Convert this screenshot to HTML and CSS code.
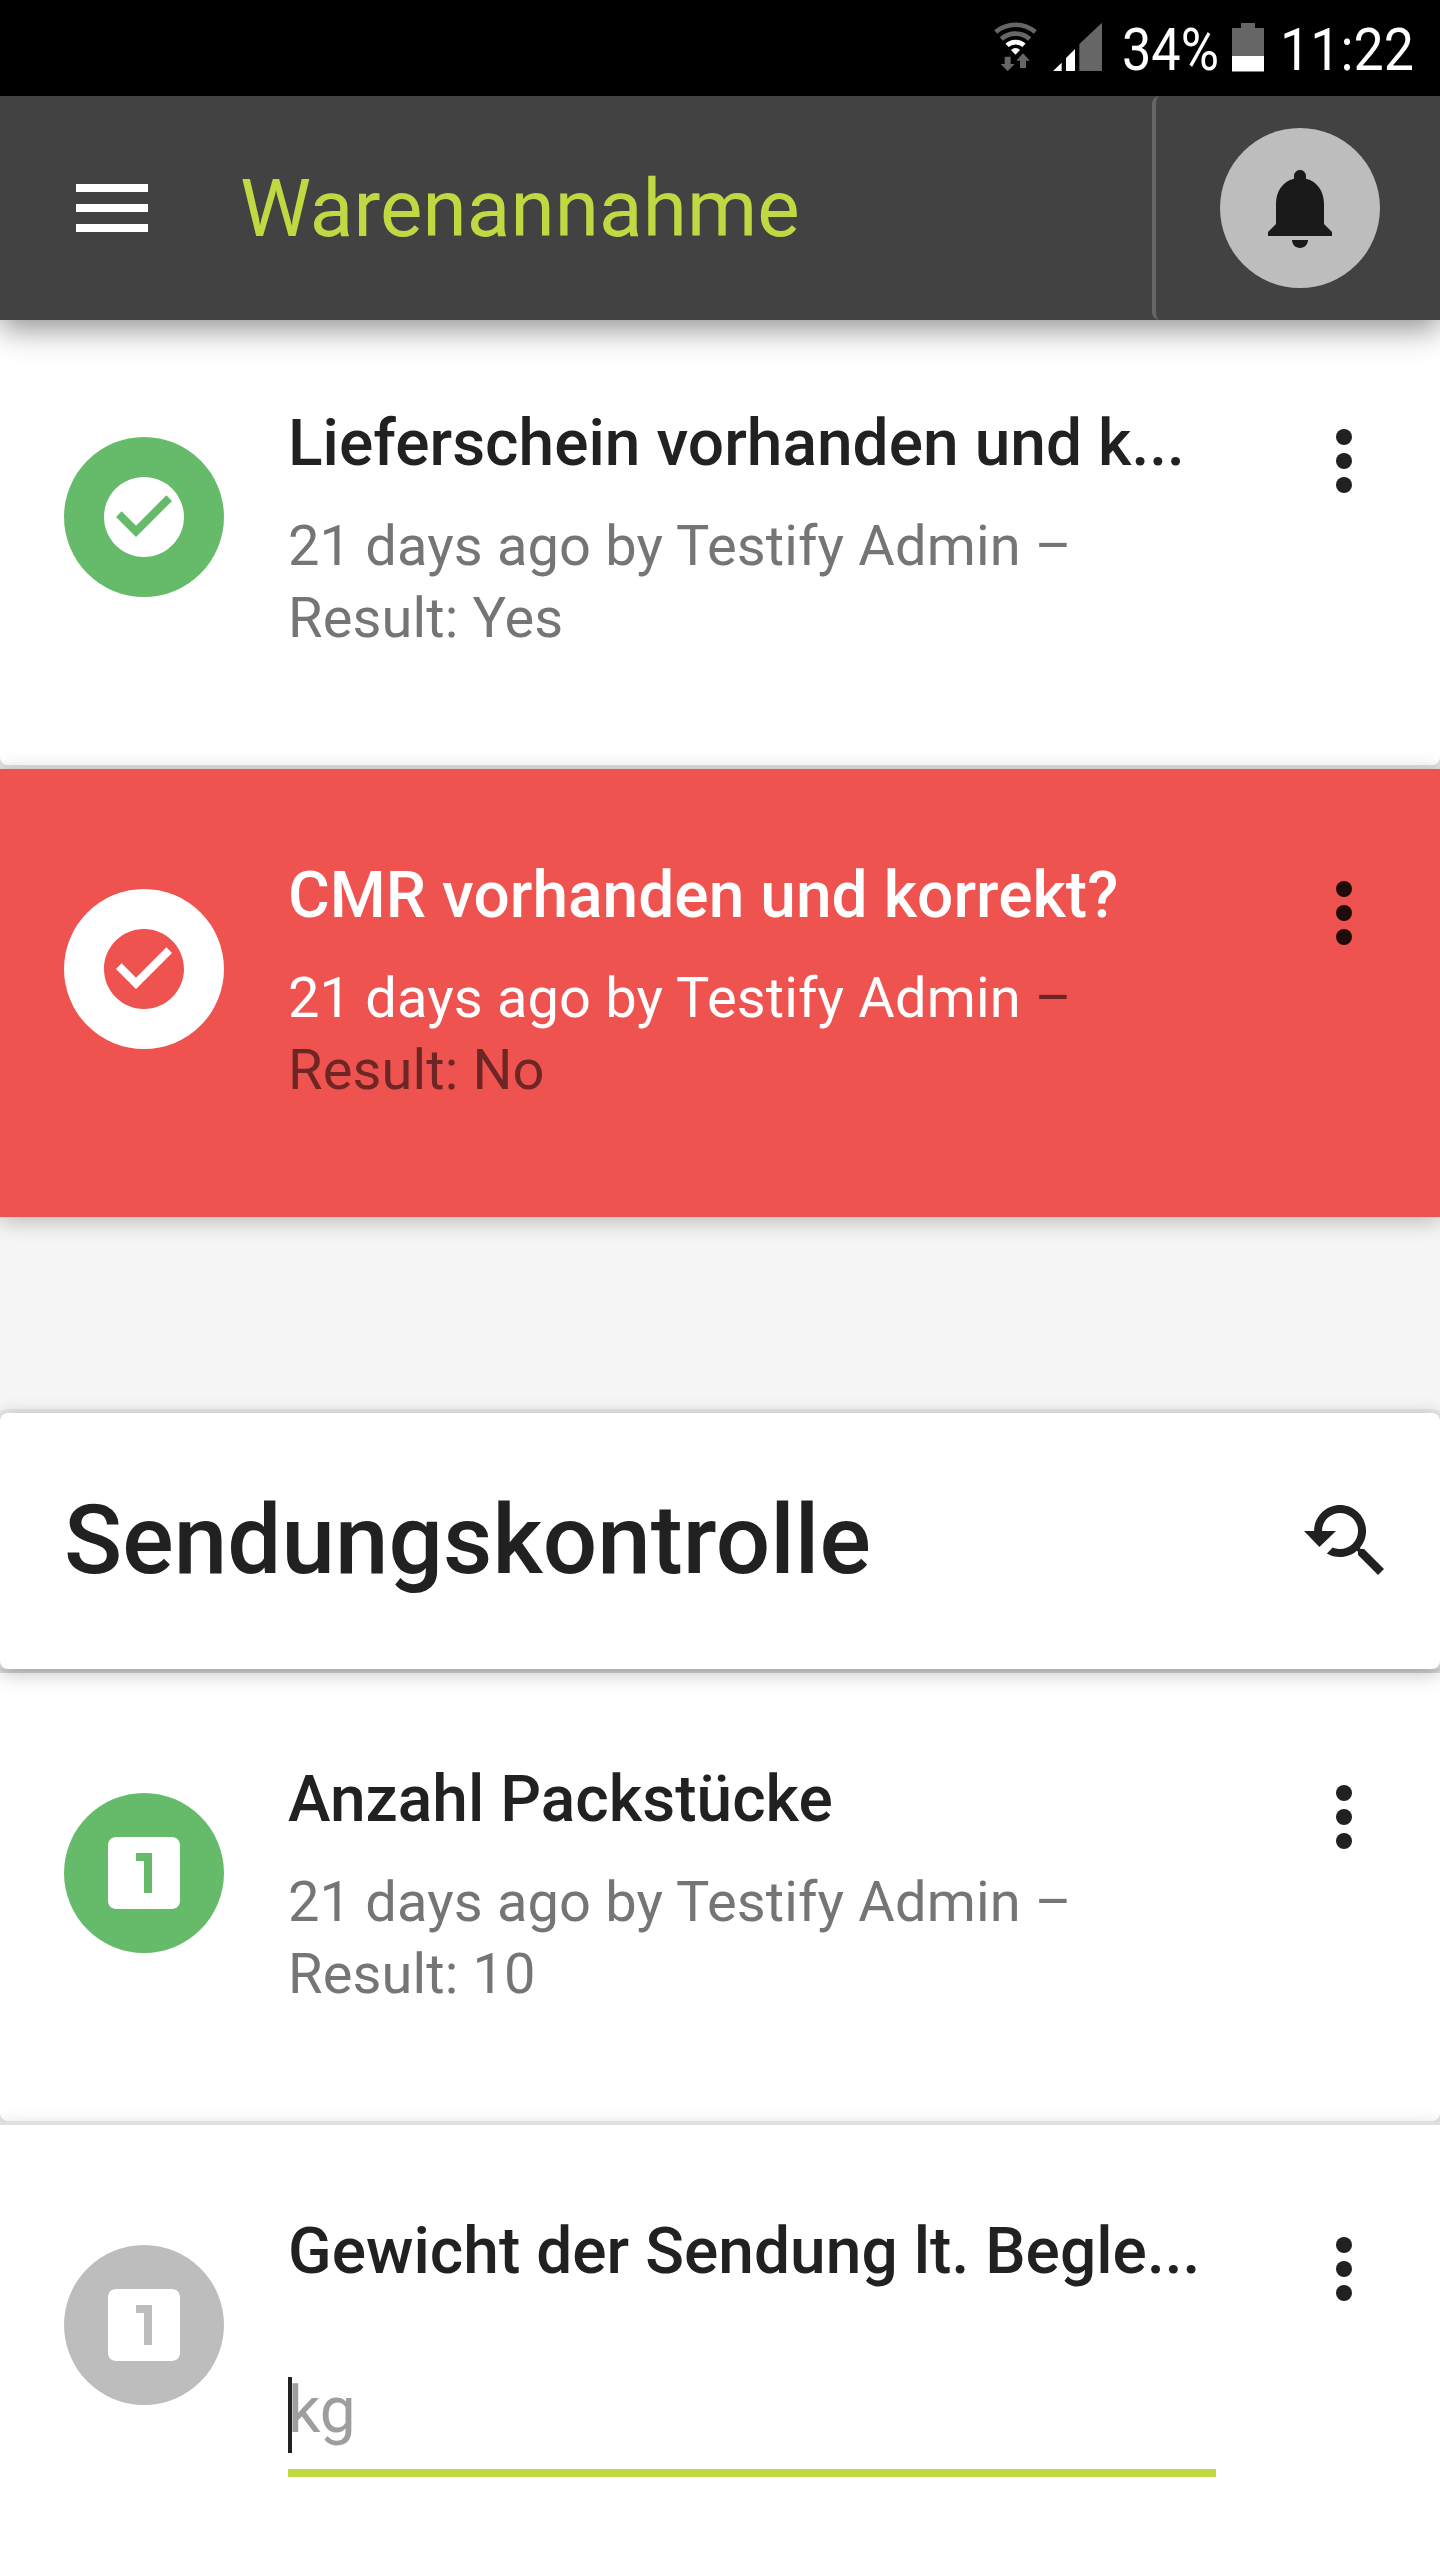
FILE: index.html
```html
<!DOCTYPE html>
<html lang="de">
<head>
    <meta charset="UTF-8">
    <meta name="viewport" content="width=device-width, initial-scale=1.0">
    <title>Warenannahme</title>
    <link rel="stylesheet" href="styles.css">
</head>
<body>
    <svg class="sprite" width="0" height="0">
        <symbol id="check" viewBox="0 0 24 24"><path d="M12 2C6.48 2 2 6.48 2 12s4.48 10 10 10 10-4.48 10-10S17.52 2 12 2zm-2 15l-5-5 1.41-1.41L10 14.17l7.59-7.59L19 8l-9 9z"/></symbol>
        <symbol id="one" viewBox="0 0 24 24"><path d="M19 3H5c-1.1 0-2 .9-2 2v14c0 1.1.9 2 2 2h14c1.1 0 2-.9 2-2V5c0-1.1-.9-2-2-2zm-5 14h-2V9h-2V7h4v10z"/></symbol>
        <symbol id="more" viewBox="0 0 24 24"><circle cx="12" cy="6" r="2"/><circle cx="12" cy="12" r="2"/><circle cx="12" cy="18" r="2"/></symbol>
    </svg>

    <div class="statusbar">
        <!-- wifi, signal -->
        <svg class="status-icons" viewBox="0 0 480 288">
            <g fill="none" stroke-width="14">
                <path stroke="#666" d="M107 96A92 92 0 0 1 226 96"/>
                <path stroke="#666" d="M124 117A64 64 0 0 1 209 117"/>
                <path stroke="#fff" d="M141 136A38 38 0 0 1 192 136"/>
            </g>
            <path fill="#fff" d="M166.500 164L153 150Q166.500 138 180 150z"/>
            <path fill="#666" d="M134 170h18v22h12l-21 22-21-22h12z"/>
            <path fill="#666" d="M180 204h18v-22h12l-21-22-20 22h11z"/>
            <path fill="#fff" d="M279 213L305 188V213zM318 213V174L345 147V213z"/>
            <path fill="#666" d="M358 213V132L426 68V213z"/>
        </svg>
        <svg class="battery-text" viewBox="0 0 100 96"><text x="0" y="70" textLength="97" lengthAdjust="spacingAndGlyphs">34%</text></svg>
        <svg class="battery" viewBox="0 0 32 96">
            <path fill="#666" d="M0 28h9v-5h14v5h9v28H0z"/>
            <path fill="#fff" d="M0 56h32v15.500H0z"/>
        </svg>
        <svg class="clock" viewBox="0 0 140 96"><text x="1" y="70" textLength="134" lengthAdjust="spacingAndGlyphs">11:22</text></svg>
    </div>

    <header class="toolbar">
        <svg class="icon menu" viewBox="0 0 24 24"><path d="M3 18h18v-2H3v2zm0-5h18v-2H3v2zm0-7v2h18V6H3z"/></svg>
        <h1>Warenannahme</h1>
        <div class="alerts">
            <div class="avatar bell">
                <svg class="icon" viewBox="0 0 24 24"><path d="M12 22c1.100 0 2-.9 2-2h-4c0 1.100.89 2 2 2zm6-6v-5c0-3.070-1.640-5.640-4.500-6.320V4c0-.83-.67-1.500-1.500-1.500s-1.500.67-1.500 1.500v.68C7.630 5.360 6 7.920 6 11v5l-2 2v1h16v-1l-2-2z"/></svg>
            </div>
        </div>
    </header>

    <main>
        <div class="item">
            <div class="avatar done"><svg class="icon"><use href="#check"/></svg></div>
            <div class="text">
                <h3>Lieferschein vorhanden und k...</h3>
                <p>21 days ago by Testify Admin –<br>Result: Yes</p>
            </div>
            <svg class="icon more"><use href="#more"/></svg>
        </div>
        <div class="item failed">
            <div class="avatar"><svg class="icon"><use href="#check"/></svg></div>
            <div class="text">
                <h3>CMR vorhanden und korrekt?</h3>
                <p><span>21 days ago by Testify Admin</span> –<br>Result: No</p>
            </div>
            <svg class="icon more"><use href="#more"/></svg>
        </div>

        <div class="group">
            <h2>Sendungskontrolle</h2>
            <svg class="icon" viewBox="0 0 24 24"><path d="M17.010 14h-.8l-.27-.27c.98-1.140 1.570-2.610 1.570-4.230 0-3.590-2.910-6.500-6.500-6.500s-6.500 3-6.500 6.500H2l3.840 4 4.160-4H6.510C6.510 7 8.530 5 11.010 5s4.500 2.010 4.500 4.500c0 2.480-2.020 4.500-4.500 4.500-.65 0-1.260-.14-1.820-.38L7.710 15.100c.97.57 2.090.9 3.300.9 1.610 0 3.080-.59 4.220-1.570l.27.27v.79l5.010 4.990L22 19l-4.990-5z"/></svg>
        </div>

        <div class="item">
            <div class="avatar done"><svg class="icon"><use href="#one"/></svg></div>
            <div class="text">
                <h3>Anzahl Packstücke</h3>
                <p>21 days ago by Testify Admin –<br>Result: 10</p>
            </div>
            <svg class="icon more"><use href="#more"/></svg>
        </div>
        <div class="item">
            <div class="avatar open"><svg class="icon"><use href="#one"/></svg></div>
            <div class="text">
                <h3>Gewicht der Sendung lt. Begle...</h3>
                <div class="field"><span class="cursor"></span>kg</div>
            </div>
            <svg class="icon more"><use href="#more"/></svg>
        </div>
    </main>
</body>
</html>
```

FILE: styles.css
```css
* {
    box-sizing: border-box;
}
body {
    font-family: Roboto, sans-serif;
    margin: 0;
    height: 2560px;
    overflow: hidden;
    background-color: #f5f5f5;
    color: #212121;
}
h1, h2, h3, p {
    margin: 0;
}
svg {
    display: block;
    flex: none;
}
.sprite {
    position: absolute;
}
.icon {
    width: 96px;
    height: 96px;
    fill: currentColor;
}

/* status bar */
.statusbar {
    display: flex;
    height: 96px;
    padding-left: 960px;
    background-color: #000;
}
.statusbar svg {
    overflow: visible;
}
.statusbar text {
    font-size: 60px;
    fill: #fff;
}
.status-icons {
    width: 160px;
    height: 96px;
}
.battery-text {
    width: 100px;
    height: 96px;
    margin-left: 2px;
}
.battery {
    width: 32px;
    height: 96px;
    margin-left: 10px;
}
.clock {
    width: 140px;
    height: 96px;
    margin-left: 15px;
}

/* toolbar */
.toolbar {
    position: relative;
    z-index: 10;
    display: flex;
    align-items: center;
    height: 224px;
    padding-left: 64px;
    background-color: #424242;
    box-shadow: 0 8px 30px rgba(0, 0, 0, 0.46);
}
.menu {
    color: #fff;
}
.toolbar h1 {
    flex: 1;
    margin-left: 80px;
    padding-top: 2px;
    font-size: 80px;
    font-weight: 400;
    letter-spacing: 0.13px;
    color: #c0d842;
}
.alerts {
    width: 288px;
    height: 224px;
    padding: 32px 0 0 64px;
    border-left: 4px solid #666;
    border-radius: 8px;
}
.avatar {
    display: flex;
    align-items: center;
    justify-content: center;
    flex: none;
    width: 160px;
    height: 160px;
    border-radius: 50%;
    color: #fff;
}
.bell {
    background-color: #bdbdbd;
    color: #1a1a1a;
}
.done {
    background-color: #66bb6a;
}
.open {
    background-color: #bdbdbd;
}

/* checklist items */
main {
    margin-top: -3px;
}
.item {
    display: flex;
    align-items: flex-start;
    height: 448px;
    margin-bottom: 4px;
    padding: 96px 48px 0 64px;
    background-color: #fff;
    border-radius: 0 0 8px 8px;
    box-shadow: 0 0 0 4px #e0e0e0, 0 4px 20px rgba(0, 0, 0, 0.26);
}
.item .avatar {
    margin-top: 24px;
}
.text {
    flex: 1;
    margin-left: 64px;
}
.text h3 {
    margin-top: -7px;
    font-size: 64px;
    line-height: 76px;
    font-weight: 500;
    letter-spacing: 0.04px;
    white-space: nowrap;
}
.text p {
    margin-top: 28px;
    font-size: 56px;
    line-height: 72px;
    letter-spacing: 0.14px;
    color: #757575;
}
.failed {
    margin-bottom: 0;
    background-color: #ef5350;
    border-radius: 0;
    box-shadow: 0 4px 20px rgba(0, 0, 0, 0.26);
}
.failed .avatar {
    background-color: #fff;
    color: #ef5350;
}
.failed h3,
.failed span {
    color: #fff;
}
.failed p {
    color: #6e2625;
}
.failed .more {
    color: #1f0b0a;
}
.group {
    position: relative;
    display: flex;
    align-items: center;
    justify-content: space-between;
    height: 256px;
    margin: 196px 0 4px;
    padding: 0 48px 0 64px;
    background-color: #fff;
    border-radius: 8px;
    box-shadow: 0 0 0 4px rgba(0, 0, 0, 0.05), 0 4px 20px rgba(0, 0, 0, 0.26);
}
.group h2 {
    padding-bottom: 2px;
    font-size: 96px;
    font-weight: 500;
    letter-spacing: 0.1px;
}
.field {
    display: flex;
    width: 928px;
    height: 100px;
    margin-top: 87px;
    border-bottom: 8px solid #c0d842;
    font-size: 64px;
    line-height: 68px;
    color: #9e9e9e;
}
.cursor {
    width: 4px;
    height: 76px;
    margin-right: -4px;
    background-color: #212121;
}
```
